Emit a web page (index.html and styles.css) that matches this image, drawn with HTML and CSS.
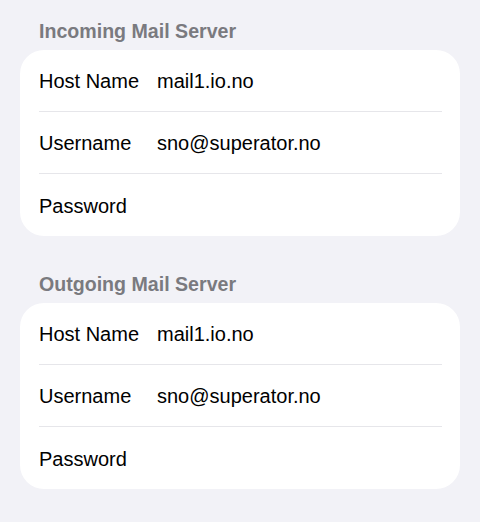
FILE: index.html
```html
<!DOCTYPE html>
<html lang="en">
<head>
    <meta charset="UTF-8">
    <meta name="viewport" content="width=device-width, initial-scale=1.0">
    <title>Mail Server Settings</title>
    <link rel="stylesheet" href="styles.css">
</head>
<body>
    <div class="settings">
        <!-- Incoming server -->
        <div class="section">
            <div class="section-title">Incoming Mail Server</div>
            <div class="card">
                <div class="row">
                    <span class="label">Host Name</span>
                    <span class="value">mail1.io.no</span>
                </div>
                <div class="row">
                    <span class="label">Username</span>
                    <span class="value">sno@superator.no</span>
                </div>
                <div class="row">
                    <span class="label">Password</span>
                    <span class="value"></span>
                </div>
            </div>
        </div>

        <!-- Outgoing server -->
        <div class="section">
            <div class="section-title">Outgoing Mail Server</div>
            <div class="card">
                <div class="row">
                    <span class="label">Host Name</span>
                    <span class="value">mail1.io.no</span>
                </div>
                <div class="row">
                    <span class="label">Username</span>
                    <span class="value">sno@superator.no</span>
                </div>
                <div class="row">
                    <span class="label">Password</span>
                    <span class="value"></span>
                </div>
            </div>
        </div>
    </div>
</body>
</html>
```

FILE: styles.css
```css
body {
    margin: 0;
    padding: 0;
    background-color: #f2f2f7;
    font-family: "Liberation Sans", Arial, sans-serif;
    color: #000;
}
.settings {
    padding: 20px 20px 0 20px;
}
.section {
    margin-bottom: 37px;
}
.section-title {
    padding-left: 19px;
    margin-bottom: 8px;
    font-size: 19.6px;
    line-height: 22px;
    font-weight: bold;
    color: #7a7a7f;
}
.card {
    background-color: #fff;
    border-radius: 24px;
    padding-left: 19px;
    overflow: hidden;
}
.row {
    display: flex;
    align-items: center;
    height: 62px;
    margin-right: 18px;
    border-bottom: 1px solid #e6e6ea;
    font-size: 20px;
    padding-top: 2px;
    box-sizing: border-box;
}
.row:last-child {
    border-bottom: none;
}
.label {
    width: 118px;
    flex-shrink: 0;
}
```
